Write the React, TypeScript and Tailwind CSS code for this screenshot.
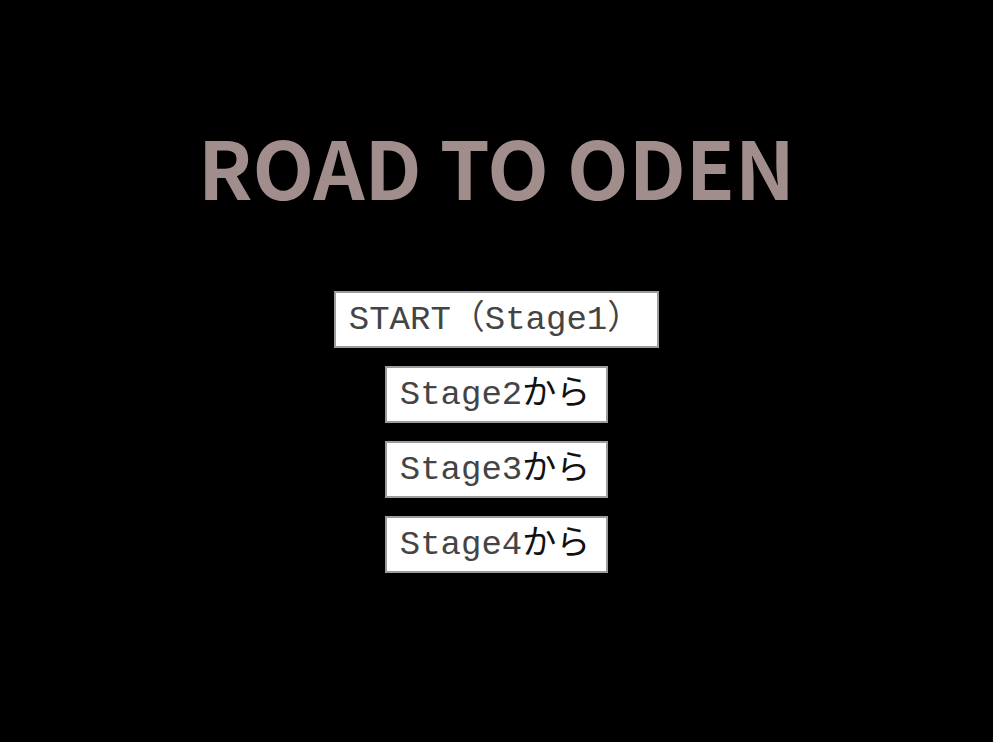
const stages = ["2", "3", "4"];

function MenuButton({ text, kana }: { text: string; kana?: string }) {
  return (
    <button className="h-[57px] flex items-center bg-white border-2 border-[#9c9c9c] pl-[13px] pr-[16px] text-[34px] leading-none font-['Liberation_Mono','Noto_Sans_CJK_JP',monospace] whitespace-pre">
      <span className="text-[#444]">{text}</span>
      {kana && <span className="text-[#111]">{kana}</span>}
    </button>
  );
}

export default function App() {
  return (
    <div className="w-full h-[742px] bg-black flex flex-col items-center">
      <h1 className="mt-[115px] text-[80px] leading-[100px] font-bold text-[#a18e8c] font-['Noto_Sans_CJK_JP','Noto_Sans',sans-serif]">
        ROAD TO ODEN
      </h1>
      <div className="mt-[76px] flex flex-col items-center gap-[18px]">
        <MenuButton text="START（Stage1）" />
        {stages.map((n) => (
          <MenuButton key={n} text={`Stage${n}`} kana="から" />
        ))}
      </div>
    </div>
  );
}
